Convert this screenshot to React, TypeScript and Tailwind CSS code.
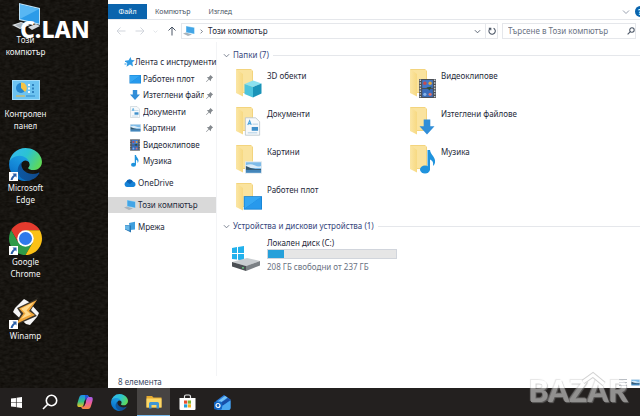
import React from 'react';

type IconProps = { className?: string };

const EdgeLogo: React.FC<IconProps> = ({ className }) => (
  <svg className={className} viewBox="4 4 257 257" aria-hidden="true">
    <defs>
      <linearGradient id="edgeDark" x1="0" y1="0" x2="1" y2="0">
        <stop offset="0" stopColor="#0c59a4" />
        <stop offset="1" stopColor="#114a8b" />
      </linearGradient>
      <linearGradient id="edgeBlue" x1="0.6" y1="0.1" x2="0.2" y2="1">
        <stop offset="0" stopColor="#1b9de2" />
        <stop offset="0.5" stopColor="#1383d4" />
        <stop offset="1" stopColor="#0067bf" />
      </linearGradient>
      <linearGradient id="edgeGreen" x1="0" y1="0.2" x2="1" y2="0.6">
        <stop offset="0" stopColor="#35b9f1" />
        <stop offset="0.5" stopColor="#2bc3d2" />
        <stop offset="1" stopColor="#5fd957" />
      </linearGradient>
    </defs>
    <path fill="url(#edgeDark)" d="M235.68 195.46a93.73 93.73 0 0 1-10.54 4.71 101.87 101.87 0 0 1-35.9 6.46c-47.32 0-88.54-32.55-88.54-74.32A31.48 31.48 0 0 1 117.13 105c-42.8 1.8-53.8 46.4-53.8 72.53 0 73.88 68.09 81.37 82.76 81.37 7.91 0 19.84-2.3 27-4.56l1.31-.44a128.34 128.34 0 0 0 66.6-52.8 4 4 0 0 0-5.32-5.64z" />
    <path fill="url(#edgeBlue)" d="M110.34 246.34A79.2 79.2 0 0 1 87.6 225a80.72 80.72 0 0 1 29.53-120c3.12-1.47 8.45-4.13 15.54-4a32.35 32.35 0 0 1 25.69 13 31.88 31.88 0 0 1 6.36 18.66c0-.21 24.46-79.6-80-79.6-43.9 0-80 41.66-80 78.21a130.15 130.15 0 0 0 12.11 56 128 128 0 0 0 156.38 67.11 75.55 75.55 0 0 1-62.78-8z" />
    <path fill="url(#edgeGreen)" d="M156.94 153.78c-.81 1.05-3.3 2.5-3.3 5.66 0 2.61 1.7 5.12 4.72 7.23 14.38 10 41.49 8.68 41.56 8.68a59.56 59.56 0 0 0 30.27-8.35A61.38 61.38 0 0 0 260.63 114c.26-22.41-8-37.31-11.34-43.91C228.09 28.76 182.35 4.92 132.61 4.92a128 128 0 0 0-128 126.2c.48-36.54 36.8-66.05 80-66.05 3.5 0 23.46.34 42 10.07 16.34 8.58 24.9 18.94 30.85 29.21 6.18 10.67 7.28 24.15 7.28 29.52s-2.74 13.33-7.8 19.91z" />
  </svg>
);

const ChromeLogo: React.FC<IconProps> = ({ className }) => (
  <svg className={className} viewBox="0 0 48 48" aria-hidden="true">
    <path fill="#e33b2e" d="M24 12H44.78A24 24 0 0 0 3.22 12L13.61 30Z" />
    <path fill="#2f9a48" d="M13.61 30L3.22 12A24 24 0 0 0 24 48L34.39 30Z" />
    <path fill="#fbc116" d="M34.39 30L24 48A24 24 0 0 0 44.78 12H24Z" />
    <circle cx="24" cy="24" r="12" fill="#fff" />
    <circle cx="24" cy="24" r="9.5" fill="#2f79ea" />
  </svg>
);

const WinampLogo: React.FC<IconProps> = ({ className }) => (
  <svg className={className} viewBox="0 0 33 33" aria-hidden="true">
    <path fill="#f5f5f5" d="M15 3L20 6L30 17L28 21L21 29L17 28L4 16L6 12Z" />
    <path fill="#3a342b" d="M29 2L8 12L12 18L5 30L28 20L22 14Z" />
    <path fill="#f0a63a" d="M28 4L10 12.500L14.500 17.500L7 28L26 19L20 15Z" />
    <path fill="#ffd98a" d="M25 6L12 12.800L16.500 17.500L12 23L22 18.500L17.500 14.500Z" />
  </svg>
);

const DesktopPc: React.FC<IconProps> = ({ className }) => (
  <svg className={className} viewBox="0 0 33 33" aria-hidden="true">
    <path fill="#dfe3e6" d="M3 25L12 22L21 25L11 29Z" />
    <path fill="#a7b0b7" d="M6 25L12 23L18 25L11 28Z" />
    <path fill="#d5dade" d="M19 27L27 24L31 26L23 30Z" />
    <path fill="#b9dff5" d="M10 3L31 8V25L10 20Z" />
    <path fill="#2c9be8" d="M11 4.500L30 9V23.500L11 19Z" />
    <path fill="#58b7f3" d="M11 4.500L30 9L11 19Z" />
  </svg>
);

const ControlPanel: React.FC<IconProps> = ({ className }) => (
  <svg className={className} viewBox="0 0 33 33" aria-hidden="true">
    <rect x="3" y="6" width="28" height="20" fill="#a5dcf8" />
    <rect x="4" y="7" width="26" height="18" fill="#6cc3f1" />
    <circle cx="12" cy="14" r="5" fill="#2586cf" />
    <path fill="#f6c445" d="M12 14V8.500A5.500 5.500 0 0 1 16 18Z" />
    <path stroke="#e9f7ff" d="M20 10v9" strokeDasharray="2 1.500" strokeWidth="2" />
    <path stroke="#1f6fae" d="M24 10v9" strokeDasharray="2 1.500" strokeWidth="1.500" />
    <path stroke="#2f86c4" d="M17 22h9" />
    <path stroke="#f1b63b" d="M7 22h9" />
  </svg>
);

const ShortcutArrow: React.FC = () => (
  <svg className="absolute bottom-0 left-0 size-[9px] bg-white" viewBox="0 0 9 9" aria-hidden="true">
    <path fill="#2a5fa8" d="M3.500 1.500H7.500V5.500L6.200 4.300C4.800 5.400 4 6.500 3.600 8H1.600C1.900 5.600 3 4.200 4.800 2.900Z" />
  </svg>
);

const MiniPc: React.FC<IconProps> = ({ className }) => (
  <svg className={className} viewBox="0 0 12 12" aria-hidden="true">
    <path fill="#a9b3bb" d="M0 8.500L3 7.500L9 9.500L5 11Z" />
    <path fill="#8ccdf2" d="M3 1L11.500 2.500V9L3 7.500Z" />
    <path fill="#43a5e6" d="M3.500 1.500L11 3V8.500L3.500 7Z" />
  </svg>
);

const QuickStar: React.FC<IconProps> = ({ className }) => (
  <svg className={className} viewBox="0 0 12 12" aria-hidden="true">
    <path fill="#2f9be4" d="M7.500 1L8.500 4L11.800 4.300L9.300 6.500L10 10.500L7 8.600L3.500 10.800L4.300 7.400L2 4.800L5.600 4.300Z" />
    <path stroke="#2f9be4" d="M1.500 8h2M2 5.500h2" />
  </svg>
);

const MiniDesktop: React.FC<IconProps> = ({ className }) => (
  <svg className={className} viewBox="0 0 12 12" aria-hidden="true">
    <rect x=".5" y="2" width="11.500" height="8.500" fill="#1582d2" />
    <path fill="#35a7f3" d="M1 2.500H11.500L1 10Z" />
    <path fill="#2799ec" d="M11.500 2.500V10H1Z" />
  </svg>
);

const DownArrow: React.FC<IconProps> = ({ className }) => (
  <svg className={className} viewBox="0 0 12 12" aria-hidden="true">
    <path fill="#318ed8" d="M3.800 1H8.200V5.500H11L6 11L1 5.500H3.800Z" />
  </svg>
);

const Paper: React.FC<IconProps> = ({ className }) => (
  <svg className={className} viewBox="0 0 12 12" aria-hidden="true">
    <path fill="#f6f9fb" stroke="#b7c2c9" strokeWidth=".5" d="M1.500 .5H8L10.500 3V11.500H1.500Z" />
    <path stroke="#4aa3dc" strokeWidth=".7" d="M3 5L4.200 2.300L5.200 5M3.400 4.200H5" fill="none" />
    <path stroke="#9cc4de" strokeWidth=".5" d="M6 4.500H9.500M3 10H9" />
    <rect x="5.500" y="6.300" width="4" height="2.400" fill="#3e8fca" />
  </svg>
);

const Photo: React.FC<IconProps> = ({ className }) => (
  <svg className={className} viewBox="0 0 18 13" aria-hidden="true">
    <rect width="18" height="13" fill="#dfe8ee" />
    <rect x="1" y="1" width="16" height="11" fill="#7dbbe8" />
    <path fill="#d9ebf7" d="M1 4Q6 2 10 4T17 5V7H1Z" />
    <path fill="#35566b" d="M1 5L6 7L11 8H17V9.500H1Z" />
    <path fill="#4485b9" d="M1 9H17V12H1Z" />
  </svg>
);

const Film: React.FC<IconProps> = ({ className }) => (
  <svg className={className} viewBox="0 0 16 18" aria-hidden="true">
    <rect width="16" height="18" fill="#4a4f56" />
    <path stroke="#c6cbd0" strokeWidth="1.400" strokeDasharray="1.300 1.300" d="M1.200 .5V18M14.800 .5V18" />
    <rect x="3" y="1" width="10" height="7.500" fill="#4378c8" />
    <rect x="3" y="9.500" width="10" height="7.500" fill="#3a6cba" />
    <circle cx="5.500" cy="4" r="1.600" fill="#c64b4f" />
    <circle cx="10.500" cy="4" r="1.600" fill="#e0a63c" />
    <circle cx="5.500" cy="14.500" r="1.500" fill="#86b3e8" />
    <circle cx="10.500" cy="14.500" r="1.500" fill="#d9706a" />
    <path fill="#2e4f3a" d="M7 8L12 7L10 11Z" />
  </svg>
);

const Note: React.FC<IconProps> = ({ className }) => (
  <svg className={className} viewBox="0 0 16 24" aria-hidden="true">
    <ellipse cx="5" cy="19.500" rx="5" ry="4" fill="#1f93dd" />
    <path fill="#1f93dd" d="M7.500 0H10C10.500 5 16 7 15 12.500C14.800 14 14 15 13 16C13.600 12 12.500 10.500 10 9.500V20H7.500Z" />
  </svg>
);

const Cube: React.FC<IconProps> = ({ className }) => (
  <svg className={className} viewBox="0 0 18 18" aria-hidden="true">
    <path fill="#8be1ef" d="M9 .5L17.500 3.500L9 7L.5 4Z" />
    <path fill="#4cc4dd" d="M.5 4L9 7V17.500L.5 14Z" />
    <path fill="#1a93b8" d="M17.500 3.500L9 7V17.500L17.500 13.500Z" />
  </svg>
);

const Cloud: React.FC<IconProps> = ({ className }) => (
  <svg className={className} viewBox="0 0 12 12" aria-hidden="true">
    <path fill="#1683d8" d="M2.800 10A2.700 2.700 0 0 1 2.300 4.800A3.700 3.700 0 0 1 8.900 4.500A2.800 2.800 0 0 1 9.500 10Z" />
    <path fill="#0a62b4" d="M2.300 4.800A3.700 3.700 0 0 1 8.900 4.500L6 7Z" />
  </svg>
);

const Network: React.FC<IconProps> = ({ className }) => (
  <svg className={className} viewBox="0 0 12 12" aria-hidden="true">
    <path fill="#3f9fdd" d="M5 2L11 .8V8.500L6 9Z" />
    <path fill="#2676b4" d="M1 4L7 4.500V11.500L1 8.500Z" />
    <path fill="#67b7e8" d="M1 4.200L5.500 5V9.800L1 8Z" />
  </svg>
);

const Pin: React.FC = () => (
  <svg className="size-[9px] shrink-0" viewBox="0 0 10 10" aria-hidden="true">
    <path fill="#84898e" d="M6 1L9 4L8 4.500L6.800 5.700L6.500 8L4.500 6L1.500 9L1 8.500L4 5.500L2 3.500L4.300 3.200L5.500 2Z" />
  </svg>
);

const Chevron: React.FC<IconProps> = ({ className }) => (
  <svg className={className} viewBox="0 0 8 8" fill="none" stroke="currentColor" aria-hidden="true">
    <path d="M1 2.500L4 5.500L7 2.500" />
  </svg>
);

const Folder: React.FC<{ children: React.ReactNode }> = ({ children }) => (
  <span className="relative block h-[30px] w-[27px] shrink-0">
    <svg className="size-full" viewBox="0 0 27 30" aria-hidden="true">
      <defs>
        <linearGradient id="folderFront" x1="0" x2="1" y1="0" y2="0">
          <stop offset="0" stopColor="#fbe6a5" />
          <stop offset="1" stopColor="#f7d982" />
        </linearGradient>
      </defs>
      <path fill="#f3d47e" d="M1 1H16L18 3V25H1Z" />
      <path fill="#fae39e" d="M3 2H17V24H6Z" />
      <path fill="url(#folderFront)" d="M1 1L8 6V28.500L1 25Z" />
    </svg>
    <span className="absolute right-0 bottom-0 flex items-end">{children}</span>
  </span>
);

const desktopItems = [
  { label: 'Този компютър', icon: <DesktopPc className="size-full" />, shortcut: false },
  { label: 'Контролен панел', icon: <ControlPanel className="size-full" />, shortcut: false },
  { label: 'Microsoft Edge', icon: <EdgeLogo className="size-full" />, shortcut: true },
  { label: 'Google Chrome', icon: <ChromeLogo className="size-full" />, shortcut: true },
  { label: 'Winamp', icon: <WinampLogo className="size-full" />, shortcut: true },
];

const quickAccess = [
  { label: 'Работен плот', icon: <MiniDesktop className="size-3" />, pinned: true },
  { label: 'Изтеглени файлове', icon: <DownArrow className="size-3" />, pinned: true },
  { label: 'Документи', icon: <Paper className="size-3" />, pinned: true },
  { label: 'Картини', icon: <Photo className="h-2 w-[11px]" />, pinned: true },
  { label: 'Видеоклипове', icon: <Film className="h-3 w-[10px]" />, pinned: false },
  { label: 'Музика', icon: <Note className="h-3 w-2" />, pinned: false },
];

const places = [
  { label: 'OneDrive', icon: <Cloud className="size-3" />, active: false },
  { label: 'Този компютър', icon: <MiniPc className="size-3" />, active: true },
  { label: 'Мрежа', icon: <Network className="size-3" />, active: false },
];

const folders = [
  { label: '3D обекти', icon: <Cube className="size-[18px]" /> },
  { label: 'Видеоклипове', icon: <Film className="h-[19px] w-[17px]" /> },
  { label: 'Документи', icon: <Paper className="size-[19px]" /> },
  { label: 'Изтеглени файлове', icon: <DownArrow className="size-[18px]" /> },
  { label: 'Картини', icon: <Photo className="h-[13px] w-[17px]" /> },
  { label: 'Музика', icon: <Note className="h-6 w-4" /> },
  { label: 'Работен плот', icon: <MiniDesktop className="size-[19px]" /> },
];

const drive = { total: 237, free: 208 };

const Wallpaper: React.FC = () => (
  <svg className="absolute inset-0 size-full" aria-hidden="true">
    <filter id="leather" colorInterpolationFilters="sRGB">
      <feTurbulence type="fractalNoise" baseFrequency="0.2 0.35" numOctaves="2" seed="4" />
      <feColorMatrix values="0.1 0 0 0 0.04  0.1 0 0 0 0.03  0.1 0 0 0 0.014  0 0 0 0 1" />
    </filter>
    <rect width="100%" height="100%" filter="url(#leather)" />
  </svg>
);

const Desktop: React.FC = () => (
  <section className="relative w-[108px] shrink-0 bg-[#191612]">
    <Wallpaper />
    <div className="relative flex w-[51px] flex-col gap-4">
      {desktopItems.map((item) => (
        <button key={item.label} className="flex flex-col items-center gap-px text-center text-[8px] leading-[12px] text-gray-100">
          <span className="relative size-[33px]">
            {item.icon}
            {item.shortcut && <ShortcutArrow />}
          </span>
          <span className="w-11">{item.label}</span>
        </button>
      ))}
    </div>
    <p className="absolute top-[15px] left-5 text-[23px] leading-7 font-extrabold text-white">C.LAN</p>
  </section>
);

const AddressRow: React.FC = () => (
  <div className="flex h-[22px] items-center pr-1 pl-2">
    <div className="flex w-[61px] items-center justify-between text-gray-300">
      <button aria-label="Назад">
        <svg className="size-[10px]" viewBox="0 0 10 10" fill="none" stroke="currentColor" aria-hidden="true">
          <path d="M9.500 5H1M4.500 1.500L1 5L4.500 8.500" />
        </svg>
      </button>
      <button aria-label="Напред">
        <svg className="size-[10px]" viewBox="0 0 10 10" fill="none" stroke="currentColor" aria-hidden="true">
          <path d="M.5 5H9M5.500 1.500L9 5L5.500 8.500" />
        </svg>
      </button>
      <button aria-label="Последни места">
        <Chevron className="size-[5px]" />
      </button>
      <button aria-label="Нагоре" className="text-gray-600">
        <svg className="size-[10px]" viewBox="0 0 10 10" fill="none" stroke="currentColor" aria-hidden="true">
          <path d="M5 9.500V1M1.500 4.500L5 1L8.500 4.500" />
        </svg>
      </button>
    </div>
    <div className="ml-1 flex h-4 flex-1 items-center border border-gray-200">
      <MiniPc className="ml-px size-3" />
      <Chevron className="ml-1 size-[5px] -rotate-90 text-gray-700" />
      <span className="ml-1 flex-1 whitespace-nowrap">Този компютър</span>
      <button aria-label="Предишни местоположения" className="px-1 text-gray-600">
        <Chevron className="size-[7px]" />
      </button>
      <button aria-label="Обнови" className="flex h-full w-3 items-center justify-center border-l border-gray-200 text-gray-600">
        <svg className="size-2" viewBox="0 0 10 10" fill="none" stroke="currentColor" strokeWidth="1.300" aria-hidden="true">
          <path d="M7 1.500A4 4 0 1 1 2.500 2M1 1.500H3.500V4.200" />
        </svg>
      </button>
    </div>
    <label className="ml-1 flex h-4 w-[134px] items-center border border-gray-200 pl-[5px]">
      <input
        type="search"
        aria-label="Търсене"
        placeholder="Търсене в Този компютър"
        className="min-w-0 flex-1 outline-none placeholder:text-gray-500"
      />
      <svg className="size-2 text-gray-600" viewBox="0 0 10 10" fill="none" stroke="currentColor" strokeWidth="1.300" aria-hidden="true">
        <circle cx="6.200" cy="3.800" r="2.800" />
        <path d="M4.200 5.800L.8 9.200" />
      </svg>
    </label>
  </div>
);

const Sidebar: React.FC = () => (
  <nav className="flex w-[109px] shrink-0 flex-col gap-[6px] border-r border-gray-100 pt-3">
    <div className="flex h-[115px] flex-col justify-between">
      <a href="#quick" className="flex h-4 items-center pl-[15px] whitespace-nowrap">
        <QuickStar className="size-3 shrink-0" />
        Лента с инструменти
      </a>
      {quickAccess.map((item) => (
        <a key={item.label} href="#folder" className="flex h-4 items-center gap-px pr-[2px] pl-5 whitespace-nowrap">
          <span className="flex w-[14px] shrink-0 justify-center">{item.icon}</span>
          <span className="flex-1 overflow-hidden">{item.label}</span>
          {item.pinned && <Pin />}
        </a>
      ))}
    </div>
    {places.map((item) => (
      <a
        key={item.label}
        href="#place"
        className={`flex h-4 items-center gap-[2px] pl-4 whitespace-nowrap ${item.active ? 'bg-[#d9d9d9]' : ''}`}
      >
        {item.icon}
        {item.label}
      </a>
    ))}
  </nav>
);

const GroupTitle: React.FC<{ children: React.ReactNode }> = ({ children }) => (
  <h2 className="flex h-3 items-center text-[#36467c]">
    <Chevron className="mr-[3px] size-[7px] text-gray-500" />
    {children}
    <span className="ml-1 h-px flex-1 bg-gray-200" />
  </h2>
);

const Content: React.FC = () => (
  <main className="min-w-0 flex-1 pt-[7px] pl-[6px]">
    <GroupTitle>Папки (7)</GroupTitle>
    <div className="mt-[7px] grid grid-cols-[174px_1fr] gap-y-2 pl-3">
      {folders.map((folder) => (
        <button key={folder.label} className="flex items-start gap-[5px] text-left">
          <Folder>{folder.icon}</Folder>
          <span className="pt-[2px]">{folder.label}</span>
        </button>
      ))}
    </div>
    <div className="mt-2">
      <GroupTitle>Устройства и дискови устройства (1)</GroupTitle>
    </div>
    <div className="mt-[5px] flex items-start pl-2">
      <svg className="mt-2 h-[27px] w-[30px]" viewBox="0 0 30 27" aria-hidden="true">
        <path fill="#22b1ec" d="M1 3L6 2V8H1ZM7 2L13 1V8H7ZM1 9H6V14.500L1 14ZM7 9H13V15.500L7 14.800Z" />
        <path fill="#c9cdd0" d="M1 17L16 13L29 16L15 21Z" />
        <path fill="#4b4f53" d="M1 17L15 21V26L1 21.500Z" />
        <path fill="#7c8185" d="M15 21L29 16V20.500L15 26Z" />
        <circle cx="12" cy="22.800" r=".9" fill="#6fe08a" />
      </svg>
      <div className="ml-[6px]">
        <p>Локален диск (C:)</p>
        <div className="h-[10px] w-[130px] border border-gray-300 bg-[#e6e6e6]">
          <div className="h-full bg-[#26a0da]" style={{ width: `${((drive.total - drive.free) / drive.total) * 100}%` }} />
        </div>
        <p className="pt-[2px] text-gray-500">208 ГБ свободни от 237 ГБ</p>
      </div>
    </div>
  </main>
);

const Explorer: React.FC = () => (
  <section className="flex min-w-0 flex-1 flex-col bg-white text-[8px] leading-[12px] text-gray-800">
    <div className="flex h-5 items-end border-b border-gray-200 pt-1">
      <button className="h-full w-[39px] bg-[#0a64ad] text-[7px] text-white">Файл</button>
      <button className="h-full px-2 text-[7px] text-gray-600">Компютър</button>
      <button className="h-full px-[10px] text-[7px] text-gray-600">Изглед</button>
      <button aria-label="Разгъни лентата" className="ml-auto h-full text-gray-400">
        <Chevron className="size-2" />
      </button>
      <span className="ml-[5px] h-full w-[5px] overflow-hidden">
        <button aria-label="Помощ" className="mt-[2px] size-[11px] rounded-full bg-[#0a64ad] pl-[3px] text-left text-[8px] leading-[11px] font-bold text-white">
          ?
        </button>
      </span>
    </div>
    <AddressRow />
    <div className="flex flex-1">
      <Sidebar />
      <Content />
    </div>
    <footer className="flex h-3 items-center gap-1 pl-[10px] text-[#3c4a63]">
      8 елемента
      <svg className="ml-auto h-[7px] w-2" viewBox="0 0 8 7" stroke="#b9bec4" aria-hidden="true">
        <path d="M0 .5H8M0 3.500H8M0 6.500H8" />
      </svg>
      <Photo className="h-[7px] w-[9px]" />
    </footer>
  </section>
);

const Taskbar: React.FC = () => (
  <footer className="flex h-7 items-stretch bg-[#23201f]">
    <button aria-label="Старт" className="flex w-8 items-center justify-center">
      <svg className="size-[11px]" viewBox="0 0 12 12" fill="#fff" aria-hidden="true">
        <path d="M0 1.700L5.400 1V5.700H0ZM6.100 .9L12 0V5.700H6.100ZM0 6.400H5.400V11L0 10.300ZM6.100 6.400H12V12L6.100 11.100Z" />
      </svg>
    </button>
    <button aria-label="Търсене" className="flex w-[35px] items-center justify-center">
      <svg className="size-4" viewBox="0 0 16 16" fill="none" stroke="#fff" strokeWidth="1.600" aria-hidden="true">
        <circle cx="9.500" cy="6.500" r="5.200" />
        <path d="M5.800 10.200L1 15" />
      </svg>
    </button>
    <button aria-label="Copilot" className="flex w-[35px] items-center justify-center">
      <svg className="size-4" viewBox="0 0 16 16" aria-hidden="true">
        <defs>
          <linearGradient id="copilotLeft" x1="0" y1="0" x2="0" y2="1">
            <stop offset="0" stopColor="#1b8ef0" />
            <stop offset="0.550" stopColor="#35c183" />
            <stop offset="1" stopColor="#f2c11d" />
          </linearGradient>
          <linearGradient id="copilotRight" x1="0" y1="0" x2="0" y2="1">
            <stop offset="0" stopColor="#a05cf0" />
            <stop offset="0.500" stopColor="#ee5d9c" />
            <stop offset="1" stopColor="#f58b3c" />
          </linearGradient>
        </defs>
        <path fill="url(#copilotLeft)" d="M5 1H10C11 1 11.500 2 12 3.500H10C9 3.500 8.500 4 8 5.500L6.500 11C6 12.500 5.500 13 4 13H2C0 13 0 11 .5 9L2 4C2.600 2 3.300 1 5 1Z" />
        <path fill="url(#copilotRight)" d="M11 15H6C5 15 4.500 14 4 12.500H6C7 12.500 7.500 12 8 10.500L9.500 5C10 3.500 10.500 3 12 3H14C16 3 16 5 15.500 7L14 12C13.400 14 12.700 15 11 15Z" />
        <path fill="#2455d8" d="M8 1H10C11 1 11.500 2 12 3C10.500 3 10 3.500 9.500 5L9 6.500L8.200 5Z" />
        <path fill="#23201f" d="M7.300 7.500L9 7.300L8.200 10L7.300 9.800Z" />
      </svg>
    </button>
    <button aria-label="Microsoft Edge" className="flex w-[35px] items-center justify-center">
      <EdgeLogo className="size-[17px]" />
    </button>
    <button aria-label="Файлове" className="flex w-[33px] items-center justify-center border-b border-[#76b9ed] bg-[#474443]">
      <svg className="size-4" viewBox="0 0 16 16" aria-hidden="true">
        <path fill="#e5a92f" d="M.5 2H6L7.500 3.500H15.500V13.500H.5Z" />
        <path fill="#fbd766" d="M.5 4.500H15.500V13.500H.5Z" />
        <path fill="#3f96d6" d="M3 14.500V9.500Q3 8 4.500 8H11.500Q13 8 13 9.500V14.500H10.500V11H5.500V14.500Z" />
      </svg>
    </button>
    <button aria-label="Microsoft Store" className="flex w-[35px] items-center justify-center">
      <svg className="size-[17px]" viewBox="0 0 17 17" aria-hidden="true">
        <path fill="none" stroke="#e8e8e8" strokeWidth="1.200" d="M5.500 5V2.500Q5.500 1 7 1H10Q11.500 1 11.500 2.500V5" />
        <path fill="#fff" d="M.5 4H16.500V15Q16.500 16 15.500 16H1.500Q.5 16 .5 15Z" />
        <path fill="#e8502e" d="M5 6.500H8.200V9.700H5Z" />
        <path fill="#7db32f" d="M8.800 6.500H12V9.700H8.800Z" />
        <path fill="#219fdb" d="M5 10.300H8.200V13.500H5Z" />
        <path fill="#f5b21c" d="M8.800 10.300H12V13.500H8.800Z" />
      </svg>
    </button>
    <button aria-label="Outlook" className="flex w-[35px] items-center justify-center">
      <svg className="size-[17px]" viewBox="0 0 17 17" aria-hidden="true">
        <path fill="#2a7de1" d="M2 7L10 1L16.500 5.500V14Q16.500 16 14.500 16H4Q2 16 2 14Z" />
        <path fill="#74c3f7" d="M3.500 7.500L11 2L13.500 3.500L5 10Z" />
        <path fill="#174fa8" d="M5 10L14 4L16.500 6L9 11.500Z" />
        <path fill="#4aa8f0" d="M9 11.500L16.500 6.500V14Q16.500 16 14.500 16H7Z" />
        <rect x="0" y="7.500" width="8" height="8" rx="1.500" fill="#1266c4" />
        <circle cx="4" cy="11.500" r="2" fill="none" stroke="#fff" strokeWidth="1.200" />
      </svg>
    </button>
  </footer>
);

const Watermark: React.FC = () => (
  <div className="pointer-events-none absolute right-3 bottom-2 opacity-50">
    <svg className="absolute -top-px right-5 h-4 w-7" viewBox="0 0 28 16" fill="none" aria-hidden="true">
      <path stroke="#a5a5a5" strokeWidth="5" d="M3 11L13 4L24 13" />
      <path stroke="#fff" strokeWidth="3" d="M3 11L13 4L24 13" />
    </svg>
    <p className="font-['Lato',sans-serif] text-[30px] leading-9 font-black text-white [text-shadow:1px_1px_1px_#999,-1px_-1px_1px_#ccc]">
      BAZAR
    </p>
  </div>
);

export default function App() {
  return (
    <div className="relative flex min-h-screen flex-col overflow-hidden font-['Noto_Sans','Open_Sans',sans-serif]">
      <div className="flex flex-1">
        <Desktop />
        <Explorer />
      </div>
      <Taskbar />
      <Watermark />
    </div>
  );
}
